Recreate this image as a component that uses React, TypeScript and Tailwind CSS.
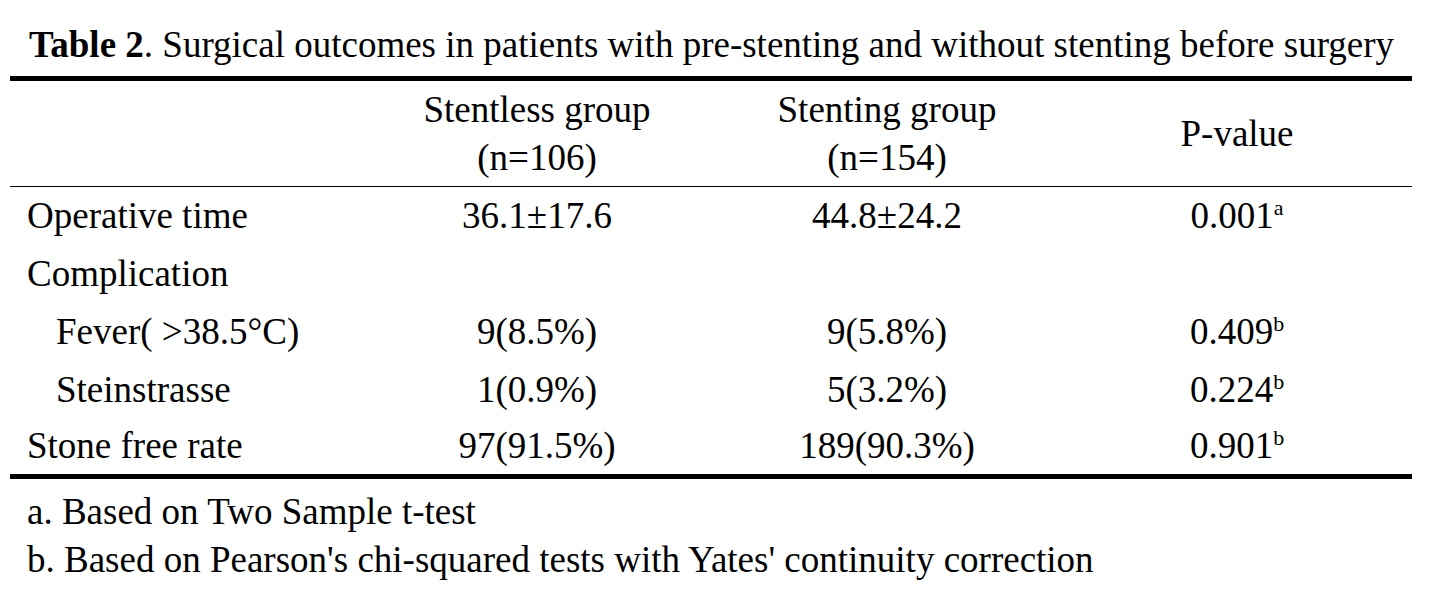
type Row = {
  label: string;
  indent?: boolean;
  a?: string;
  b?: string;
  p?: string;
  sup?: string;
};

const rows: Row[] = [
  { label: "Operative time", a: "36.1±17.6", b: "44.8±24.2", p: "0.001", sup: "a" },
  { label: "Complication" },
  { label: "Fever( >38.5°C)", indent: true, a: "9(8.5%)", b: "9(5.8%)", p: "0.409", sup: "b" },
  { label: "Steinstrasse", indent: true, a: "1(0.9%)", b: "5(3.2%)", p: "0.224", sup: "b" },
  { label: "Stone free rate", a: "97(91.5%)", b: "189(90.3%)", p: "0.901", sup: "b" },
];

export default function App() {
  return (
    <div
      className="w-[1434px] h-[598px] bg-white text-black pl-[10px] pt-[24px]"
      style={{ fontFamily: '"Liberation Serif", "Times New Roman", serif' }}
    >
      <p className="pl-[19px] text-[37px] leading-[42px] whitespace-nowrap">
        <b>Table 2</b>. Surgical outcomes in patients with pre-stenting and without stenting before surgery
      </p>
      <table className="mt-[10px] w-[1402px] border-collapse text-[37px] table-fixed">
        <colgroup>
          <col className="w-[352px]" />
          <col className="w-[350px]" />
          <col className="w-[350px]" />
          <col className="w-[350px]" />
        </colgroup>
        <thead>
          <tr className="border-t-[5px] border-b border-black h-[108px]">
            <th />
            <th className="font-normal leading-[48px] text-center">
              Stentless group
              <br />
              (n=106)
            </th>
            <th className="font-normal leading-[48px] text-center">
              Stenting group
              <br />
              (n=154)
            </th>
            <th className="font-normal leading-[48px] text-center">P-value</th>
          </tr>
        </thead>
        <tbody>
          {rows.map((r, i) => (
            <tr
              key={r.label}
              className={`h-[58px] ${i === rows.length - 1 ? "border-b-[5px] border-black" : ""}`}
            >
              <td className={`leading-[42px] whitespace-nowrap ${r.indent ? "pl-[46px]" : "pl-[17px]"}`}>
                {r.label}
              </td>
              <td className="text-center leading-[42px]">{r.a}</td>
              <td className="text-center leading-[42px]">{r.b}</td>
              <td className="text-center leading-[42px]">
                {r.p}
                {r.sup && <sup className="text-[22px] relative -top-[13px]">{r.sup}</sup>}
              </td>
            </tr>
          ))}
        </tbody>
      </table>
      <div className="pt-[9px] pl-[17px] text-[37px] leading-[48px]">
        <p>a. Based on Two Sample t-test</p>
        <p>b. Based on Pearson's chi-squared tests with Yates' continuity correction</p>
      </div>
    </div>
  );
}
